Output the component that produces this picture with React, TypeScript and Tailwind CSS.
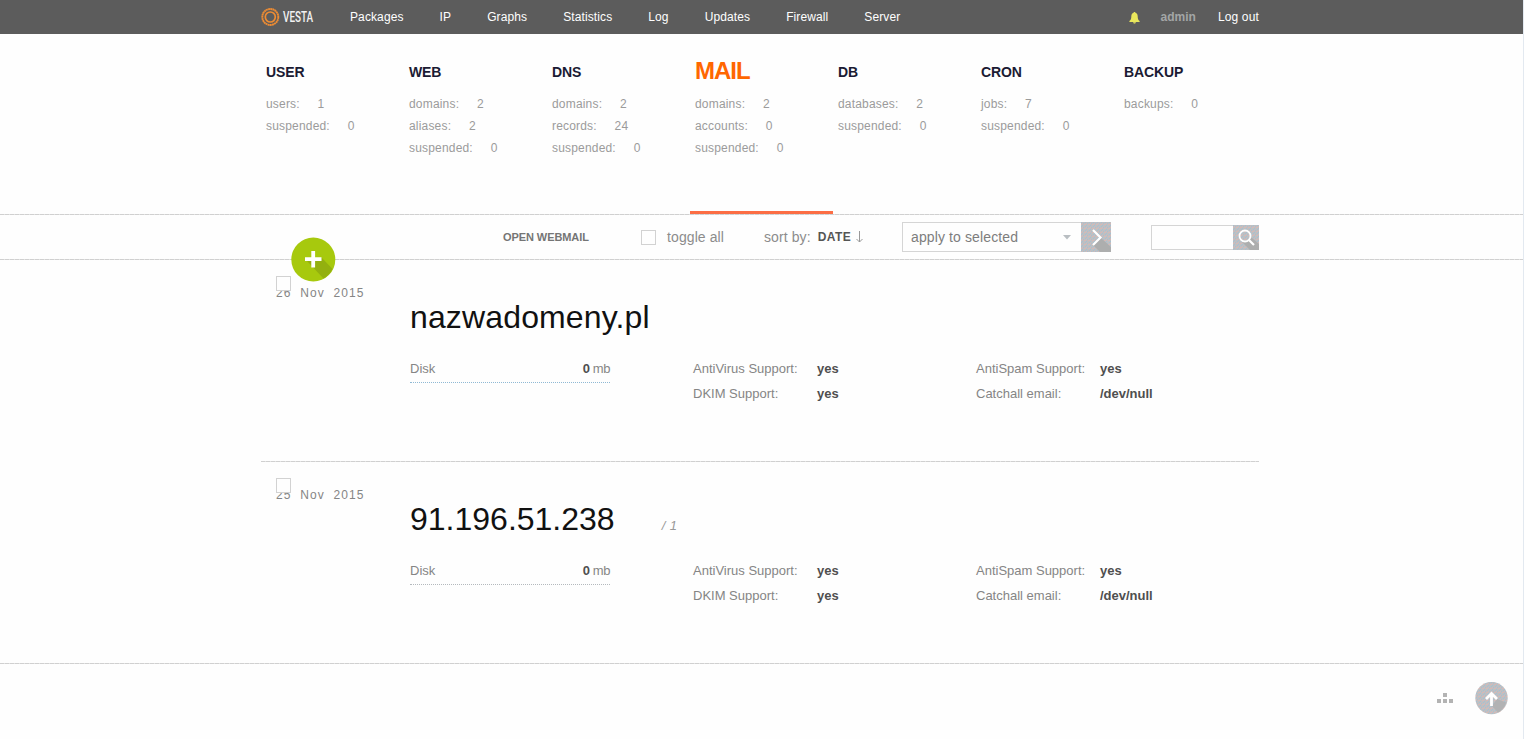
import React from 'react'

const menu = ['Packages', 'IP', 'Graphs', 'Statistics', 'Log', 'Updates', 'Firewall', 'Server']

const stats = [
    { title: 'USER', rows: [['users', '1'], ['suspended', '0']] },
    { title: 'WEB', rows: [['domains', '2'], ['aliases', '2'], ['suspended', '0']] },
    { title: 'DNS', rows: [['domains', '2'], ['records', '24'], ['suspended', '0']] },
    { title: 'MAIL', active: true, rows: [['domains', '2'], ['accounts', '0'], ['suspended', '0']] },
    { title: 'DB', rows: [['databases', '2'], ['suspended', '0']] },
    { title: 'CRON', rows: [['jobs', '7'], ['suspended', '0']] },
    { title: 'BACKUP', rows: [['backups', '0']] },
]

const domains = [
    { day: '26', name: 'nazwadomeny.pl', accounts: '', dots: 'border-[#8fb9d4]', tracking: 'tracking-[0.14px]' },
    { day: '25', name: '91.196.51.238', accounts: '/ 1', dots: 'border-[#b4b9bd]', tracking: 'tracking-[0px]' },
]

function Line() {
    return <div className="h-px w-full bg-[repeating-linear-gradient(90deg,#d0d0d0_0_4px,#e2e2e2_4px_5px)]"></div>
}

function Checkbox() {
    return <div className="h-[15px] w-[15px] shrink-0 border border-[#d2d2d2] bg-[#fefefe]"></div>
}

// fine blue / pink grain on the grey buttons
function Grain() {
    return (
        <defs>
            <pattern id="grain" width="4" height="4" patternUnits="userSpaceOnUse">
                <path d="M0 0h4v4H0z" fill="#bfbfc1" />
                <path d="M0 0h1v1H0zM2 1h1v1H2zM1 3h1v1H1z" fill="#a6c0d2" />
                <path d="M1 1h1v1H1zM3 2h1v1H3zM0 2h1v1H0z" fill="#d4b9b7" />
            </pattern>
        </defs>
    )
}

function Logo() {
    return (
        <svg className="overflow-visible" width="54" height="20" viewBox="0 0 54 20">
            <circle cx="9.3" cy="10" r="8" fill="none" stroke="#ee8c33" strokeWidth="1.9" strokeDasharray="1.9 0.3" />
            <circle cx="9.3" cy="10" r="5" fill="none" stroke="#ee8c33" strokeWidth="1.7" />
            <text transform="translate(22 15) scale(0.66 1)" fontSize="15" fontFamily="Roboto, sans-serif" fontWeight="500" fill="#f2f2f2">VESTA</text>
        </svg>
    )
}

function Header() {
    return (
        <div className="h-[34px] bg-[#5c5c5c] text-xs text-white">
            <div className="ml-[261px] flex h-[34px] w-[998px] items-center">
                <Logo />
                <div className="ml-[35px] flex gap-9 tracking-[0.11px]">
                    {menu.map((item) => <span key={item}>{item}</span>)}
                </div>
                <div className="ml-auto flex items-center">
                    <svg className="mr-[21px] mt-px" width="11" height="12" viewBox="0 0 11 12" fill="#e9e75c">
                        <path d="M4.7 0h1.6v.8C8 1.3 8.7 2.6 8.7 4.5c0 2.2.5 3.5 1.9 4.5v.9H.4V9c1.4-1 1.9-2.3 1.9-4.500C2.300 2.600 3 1.300 4.700.8zM4 10.300h3c-.2.8-.8 1.200-1.500 1.200S4.200 11.100 4 10.300z" />
                    </svg>
                    <span className="mr-[22px] font-bold text-[#a3a6a6]">admin</span>
                    <span className="tracking-[0.15px]">Log out</span>
                </div>
            </div>
        </div>
    )
}

function Stats() {
    return (
        <div className="ml-[261px] flex h-[180px]">
            {stats.map((s) => (
                <div key={s.title} className={'flex w-[143px] flex-col pl-[5px] pt-[23px] ' + (s.active ? 'relative' : '')}>
                    <div className={s.active ? 'h-[36px] text-2xl leading-[28px] font-bold tracking-[-1px] text-[#ff6600]' : 'h-[36px] text-sm leading-[30px] font-bold tracking-[-0.1px] text-[#1b1b33]'}>{s.title}</div>
                    {s.rows.map(([label, value]) => (
                        <div key={label} className="flex gap-[17.800px] text-xs leading-[22px] tracking-[0.18px] text-[#9b9b9b]">
                            <span>{label}:</span>
                            <span>{value}</span>
                        </div>
                    ))}
                    {s.active && <div className="absolute bottom-0 left-0 h-[3px] w-[143px] bg-[#fc6e45]"></div>}
                </div>
            ))}
        </div>
    )
}

function Toolbar() {
    return (
        <div className="relative ml-[261px] flex h-[44px] w-[998px] items-center text-sm text-[#8c8c8c]">
            <svg className="absolute left-[30px] top-[22px] z-10" width="45" height="45" viewBox="0 0 45 45">
                <circle cx="22.300" cy="22.500" r="22" fill="#a7c90d" />
                <path d="M16 24l14.500-3.500 11 11.500a22 22 0 0 1-9 9.500z" fill="#93b00f" />
                <path d="M14 22.200h16.500M22.200 14v16.500" stroke="#fff" strokeWidth="3.800" />
            </svg>
            <div className="w-[138px] pt-px pl-[242px] text-[11px] font-bold tracking-[-0.08px] whitespace-nowrap text-[#757575]">OPEN WEBMAIL</div>
            <div className="ml-[138px] flex w-[123px] items-center gap-[11px]">
                <Checkbox />
                <span className="tracking-[0.1px] whitespace-nowrap">toggle all</span>
            </div>
            <div className="flex w-[138px] items-center">
                <span className="tracking-[0.1px]">sort by:</span>
                <span className="ml-[7px] text-xs font-bold tracking-[0.4px] text-[#555]">DATE</span>
                <svg className="ml-[5px]" width="8" height="12" viewBox="0 0 8 12" fill="none" stroke="#999">
                    <path d="M3.500 0v11M.5 8l3 3 3-3" />
                </svg>
            </div>
            <div className="flex h-[30px] w-[179px] items-center justify-between border border-r-0 border-[#d5d5d5] pr-[10px] pl-2 text-[#7d7d7d]">
                <span className="tracking-[0.12px]">apply to selected</span>
                <svg width="8" height="5" viewBox="0 0 8 5" fill="#b9bec2"><path d="M0 0h8L4 4.500z" /></svg>
            </div>
            <svg width="30" height="30" viewBox="0 0 30 30">
                <Grain />
                <path d="M0 0h30v30H0z" fill="url(#grain)" />
                <path d="M12 23l8-7 10 9v5H19z" fill="#adaeae" />
                <path d="M12 8l7.500 7.500L12 23" fill="none" stroke="#fff" strokeWidth="2.200" />
            </svg>
            <div className="ml-10 h-[25px] w-[82px] border border-r-0 border-[#d5d5d5]"></div>
            <svg width="26" height="25" viewBox="0 0 26 25">
                <path d="M0 0h26v25H0z" fill="url(#grain)" />
                <path d="M9 17l10-4 7 6v6h-9z" fill="#adaeae" />
                <circle cx="12" cy="11" r="5.500" fill="none" stroke="#fff" strokeWidth="1.800" />
                <path d="M16 15l5 5" stroke="#fff" strokeWidth="2.200" />
            </svg>
        </div>
    )
}

function Field({ label, value }: { label: string; value: string }) {
    return (
        <div className="flex h-[25px] items-center">
            <span className="w-[124px]">{label}</span>
            <b className="text-[#4f4f4f]">{value}</b>
        </div>
    )
}

function Domain({ item }: { item: typeof domains[number] }) {
    return (
        <div className="ml-[261px] flex h-[201px] w-[998px] text-[13px] text-[#858585]">
            <div className="relative w-[149px] pt-[25px] pl-[15px]">
                <div className="text-xs leading-4 tracking-[1.05px] whitespace-pre">{item.day}  Nov  2015</div>
                <div className="absolute left-[15px] top-[16px]"><Checkbox /></div>
            </div>
            <div>
                <div className="flex h-[96px] items-baseline pt-[38px]">
                    <span className={'text-[32px] leading-[38px] text-[#111] ' + item.tracking}>{item.name}</span>
                    <span className="ml-[47px] text-[13px] tracking-[0.5px] text-[#999] italic">{item.accounts}</span>
                </div>
                <div className="flex">
                    <div className="w-[283px]">
                        <div className={'flex h-[27px] w-[200px] justify-between border-b border-dotted leading-[25px] ' + item.dots}>
                            <span>Disk</span>
                            <span className="tracking-[-0.4px]"><b className="text-[#4f4f4f]">0</b> mb</span>
                        </div>
                    </div>
                    <div className="w-[283px]">
                        <Field label="AntiVirus Support:" value="yes" />
                        <Field label="DKIM Support:" value="yes" />
                    </div>
                    <div>
                        <Field label="AntiSpam Support:" value="yes" />
                        <Field label="Catchall email:" value="/dev/null" />
                    </div>
                </div>
            </div>
        </div>
    )
}

export default function App() {
    return (
        <div className="h-[739px] overflow-hidden border-r border-[#e3e9f0] bg-[#fefefe] font-['Liberation_Sans',Arial,sans-serif]">
            <Header />
            <Stats />
            <Line />
            <Toolbar />
            <Line />
            <Domain item={domains[0]} />
            <div className="ml-[261px] w-[998px]"><Line /></div>
            <Domain item={domains[1]} />
            <Line />
            <div className="flex h-[68px] items-center justify-end gap-[22px] pr-[15px]">
                <svg className="mb-px" width="16" height="10" viewBox="0 0 16 10" fill="#b3b3b3">
                    <path d="M6 0h4v4H6zM0 6h4v4H0zM6 6h4v4H6zM12 6h4v4h-4z" />
                </svg>
                <svg width="33" height="33" viewBox="0 0 33 33">
                    <circle cx="16.500" cy="16" r="16.200" fill="url(#grain)" />
                    <path d="M17 24l5-7 9 3.500a16 16 0 0 1-8 10z" fill="#b2b2b3" />
                    <path d="M16.500 24V12.500M11 17l5.500-5.500L22 17" fill="none" stroke="#fff" strokeWidth="2.800" />
                </svg>
            </div>
        </div>
    )
}
